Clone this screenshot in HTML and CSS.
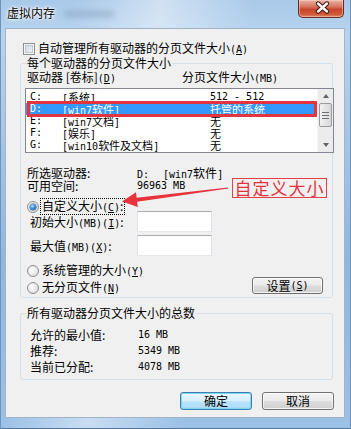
FILE: index.html
```html
<!DOCTYPE html>
<html lang="zh-CN">
<head>
<meta charset="utf-8">
<title>虚拟内存</title>
<link rel="stylesheet" href="styles.css">
</head>
<body>
<div class="window">
  <div class="titlebar">
    <span class="title">虚拟内存</span>
    <span class="title-blur"></span>
    <span class="close">
      <svg width="46" height="18" viewBox="0 0 46 18">
        <path d="M20 4.5 L29 12.5 M29 4.5 L20 12.5" stroke="#3b140e" stroke-width="4.4" stroke-linecap="round" fill="none"/>
        <path d="M20 4.5 L29 12.5 M29 4.5 L20 12.5" stroke="#ffffff" stroke-width="2.4" stroke-linecap="round" fill="none"/>
      </svg>
    </span>
  </div>

  <div class="client">
    <div class="chk-row"><span class="chk"></span><span>自动管理所有驱动器的分页文件大小<span class="m">(<u>A</u>)</span></span></div>

    <fieldset class="group g1">
      <legend>每个驱动器的分页文件大小</legend>
      <div class="hdr"><span class="c1">驱动器 [卷标]<span class="m">(<u>D</u>)</span></span><span>分页文件大小<span class="m">(MB)</span></span></div>
      <div class="list">
        <div class="rows">
          <div class="row"><span class="drv m">C:</span><span class="lbl"><span class="m">[</span>系统<span class="m">]</span></span><span class="m">512 - 512</span></div>
          <div class="row sel"><span class="drv m">D:</span><span class="lbl"><span class="m">[win7</span>软件<span class="m">]</span></span><span>托管的系统</span></div>
          <div class="row"><span class="drv m">E:</span><span class="lbl"><span class="m">[win7</span>文档<span class="m">]</span></span><span>无</span></div>
          <div class="row"><span class="drv m">F:</span><span class="lbl"><span class="m">[</span>娱乐<span class="m">]</span></span><span>无</span></div>
          <div class="row"><span class="drv m">G:</span><span class="lbl"><span class="m">[win10</span>软件及文档<span class="m">]</span></span><span>无</span></div>
        </div>
        <div class="sbar">
          <div class="sb-btn"><span class="arr up"></span></div>
          <div class="sb-thumb"><span class="grip"></span></div>
          <div class="sb-track"></div>
          <div class="sb-btn"><span class="arr down"></span></div>
        </div>
      </div>

      <div class="kv first"><span class="k">所选驱动器:</span><span class="v"><span class="m drvv">D:</span><span class="m">[win7</span>软件<span class="m">]</span></span></div>
      <div class="kv"><span class="k">可用空间:</span><span class="v m">96963 MB</span></div>

      <div class="radio-row custom"><span class="radio on"></span><span class="focus">自定义大小<span class="m">(<u>C</u>)</span>:</span></div>
      <div class="field f1"><span class="k">初始大小<span class="m">(MB)(<u>I</u>)</span>:</span><span class="input"></span></div>
      <div class="field f2"><span class="k">最大值<span class="m">(MB)(<u>X</u>)</span>:</span><span class="input"></span></div>

      <div class="opts">
        <div class="col">
          <div class="radio-row"><span class="radio"></span><span>系统管理的大小<span class="m">(<u>Y</u>)</span></span></div>
          <div class="radio-row second"><span class="radio"></span><span>无分页文件<span class="m">(<u>N</u>)</span></span></div>
        </div>
        <span class="btn set">设置<span class="m">(<u>S</u>)</span></span>
      </div>
    </fieldset>

    <fieldset class="group g2">
      <legend>所有驱动器分页文件大小的总数</legend>
      <div class="kv"><span class="k">允许的最小值:</span><span class="v m">16 MB</span></div>
      <div class="kv"><span class="k">推荐:</span><span class="v m">5349 MB</span></div>
      <div class="kv"><span class="k">当前已分配:</span><span class="v m">4078 MB</span></div>
    </fieldset>

    <div class="actions">
      <span class="btn default">确定</span>
      <span class="btn">取消</span>
    </div>
  </div>

  <svg class="annot" width="351" height="429" viewBox="0 0 351 429">
    <rect x="28.5" y="102.5" width="287" height="13" fill="none" stroke="#e2353f" stroke-width="3"/>
    <polygon points="122,201.5 136,192.3 136.6,197.7 227.9,187.4 228.1,188.6 137.1,201.8 137.8,207.1" fill="#e8323c"/>
  </svg>
  <div class="callout">自定义大小</div>
</div>
</body>
</html>
```

FILE: styles.css
```css
* { box-sizing: border-box; }
html, body { margin: 0; padding: 0; }
body {
  width: 351px;
  height: 429px;
  overflow: hidden;
  font-family: "Noto Sans CJK SC", "Noto Sans", sans-serif;
  font-size: 12px;
  color: #000;
  background: #fff;
}
u { text-decoration: underline; text-underline-offset: 1px; }

.m {
  font-family: "DejaVu Sans Mono", "Liberation Mono", monospace;
  font-size: 10px;
}

.window {
  position: relative;
  width: 351px;
  height: 429px;
  display: flex;
  flex-direction: column;
  background:
    linear-gradient(100deg, rgba(255,255,255,0) 18%, rgba(255,255,255,0.45) 38%, rgba(255,255,255,0) 60%),
    linear-gradient(180deg, #a9c9e9 0%, #b7d3ee 8%, #8fb7e0 60%, #9cc1e6 100%);
  box-shadow: inset 1px 0 #6f94bb, inset -1px 0 #6f94bb, inset 0 -1px #55779c;
}

/* title bar */
.titlebar {
  height: 28px;
  display: flex;
  align-items: flex-start;
  padding-left: 7px;
}
.title {
  margin-top: 6px;
  line-height: 14px;
  text-shadow: 0 0 5px #fff, 0 0 3px #fff, 0 0 2px #fff;
}
.title-blur {
  width: 50px;
  height: 8px;
  margin: 10px 0 0 9px;
  border-radius: 4px;
  background: rgba(140, 160, 190, 0.45);
  filter: blur(2.5px);
}
.close {
  margin-left: auto;
  margin-right: 7px;
  width: 46px;
  height: 18px;
  display: block;
  border: 1px solid #6a2a22;
  border-top: none;
  border-radius: 0 0 5px 5px;
  background: linear-gradient(180deg, #eab3a6 0%, #d8735f 40%, #c6442b 55%, #cf5a3c 85%, #e08a6a 100%);
  box-shadow: inset 0 0 0 1px rgba(255, 220, 210, 0.45);
}
.close svg { display: block; margin: -1px 0 0 -1px; }

/* client area */
.client {
  flex: 1;
  margin: 0 6px 11px 5px;
  border: 1px solid #a2b4c8;
  background: #f0f0f0;
}

.chk-row {
  display: flex;
  align-items: center;
  gap: 3px;
  height: 14px;
  line-height: 14px;
  margin: 13px 0 0 17px;
}
.chk {
  width: 12px;
  height: 12px;
  border: 1px solid #8e8f8f;
  background: linear-gradient(135deg, #cdd1d6, #f7f7f7);
  box-shadow: inset 0 0 0 1px #f4f4f4, inset 0 0 0 2px #c4c8cd;
}

/* group boxes */
.group {
  margin: 0 0 0 14px;
  width: 313px;
  min-width: 0;
  border: 1px solid #d5dfe5;
  border-radius: 3px;
  padding: 0 0 3px 6px;
}
.group legend {
  padding: 0 1px;
  margin-left: -1px;
  height: 14px;
  line-height: 14px;
  font-size: 12px;
}
.g2 {
  margin-top: 8px;
  padding-top: 7px;
  padding-bottom: 4px;
}

.hdr {
  display: flex;
  height: 14px;
  line-height: 14px;
}
.hdr .c1 { width: 155px; }

/* list box */
.list {
  margin: 4px -2px 0 -2px;
  height: 65px;
  border: 1px solid #828790;
  background: #fff;
  display: flex;
  font-size: 11px;
}
.rows { flex: 1; padding-top: 2px; }
.row {
  display: flex;
  height: 12px;
  line-height: 12px;
  padding-left: 4px;
  white-space: pre;
}
.row .drv { width: 32px; }
.row .lbl { width: 148px; }
.row.sel { background: #3399ff; color: #fff; }

.sbar {
  width: 16px;
  display: flex;
  flex-direction: column;
  background: #ececec;
  border-left: 1px solid #f6f6f6;
}
.sb-btn {
  height: 14px;
  display: flex;
  align-items: center;
  justify-content: center;
}
.arr {
  width: 0;
  height: 0;
  border-left: 3.5px solid transparent;
  border-right: 3.5px solid transparent;
}
.arr.up { border-bottom: 4px solid #606468; }
.arr.down { border-top: 4px solid #606468; }
.sb-thumb {
  height: 24px;
  margin: 0 1px;
  border: 1px solid #9a9a9a;
  border-radius: 2px;
  background: linear-gradient(90deg, #f3f3f3, #e4e4e4 50%, #d8d8d8);
  display: flex;
  align-items: center;
  justify-content: center;
}
.grip {
  width: 7px;
  height: 7px;
  background: repeating-linear-gradient(180deg, #707070 0 1px, transparent 1px 3px);
}
.sb-track { flex: 1; }

/* key-value rows */
.kv {
  display: flex;
  height: 13px;
  line-height: 13px;
  white-space: pre;
}
.kv.first { margin-top: 13px; }
.kv .k { width: 110px; }
.drvv { display: inline-block; width: 26px; }

.g2 .kv { height: 16px; line-height: 16px; }
.g2 .kv .k { width: 111px; padding-left: 3px; }

/* radios */
.radio-row {
  display: flex;
  align-items: center;
  gap: 3px;
  height: 13px;
  line-height: 13px;
}
.radio-row.custom { margin-top: 8px; }
.radio-row.second { margin-top: 4px; }
.radio {
  position: relative;
  width: 12px;
  height: 12px;
  border-radius: 50%;
  border: 1px solid #8e8f8f;
  background: radial-gradient(circle at 40% 40%, #ffffff 0%, #e6e6e6 60%, #c9c9c9 100%);
}
.radio.on::after {
  content: "";
  position: absolute;
  left: 2px;
  top: 2px;
  width: 6px;
  height: 6px;
  border-radius: 50%;
  background: radial-gradient(circle at 40% 35%, #b6e3fb 0%, #3d8fd8 45%, #0e4d98 100%);
  box-shadow: 0 0 0 0.5px #1b4f86;
}
.focus {
  outline: 1px dotted #000;
  outline-offset: 0;
  padding: 0 1px;
  margin-left: -1px;
}

/* edit fields */
.field {
  display: flex;
  align-items: center;
  height: 21px;
  white-space: pre;
}
.field.f1 { margin-top: -2px; }
.field.f2 { margin-top: 3px; }
.field .k { width: 110px; padding-left: 3px; }
.input {
  width: 75px;
  height: 21px;
  background: #fff;
  border: 1px solid;
  border-color: #abadb3 #dbdfe6 #e3e9ef #e2e3ea;
}

.opts {
  display: flex;
  align-items: flex-end;
  margin-top: 8px;
}

/* buttons */
.btn {
  display: flex;
  align-items: center;
  justify-content: center;
  width: 72px;
  height: 18px;
  line-height: 16px;
  border: 1px solid #707070;
  border-radius: 3px;
  background: linear-gradient(180deg, #f2f2f2 0%, #ebebeb 48%, #dddddd 52%, #cfcfcf 100%);
  box-shadow: inset 0 0 0 1px rgba(255, 255, 255, 0.75);
  white-space: pre;
}
.btn.set {
  width: 71px;
  height: 17px;
  margin-left: auto;
  margin-right: 9px;
}
.btn.default {
  border-color: #3c7fb1;
  background: linear-gradient(180deg, #eaf6fd 0%, #d9f0fc 48%, #bee6fd 52%, #a7d9f5 100%);
  box-shadow: inset 0 0 0 1px #7fd3f5;
}
.actions {
  display: flex;
  justify-content: flex-end;
  gap: 10px;
  margin-top: 12px;
  padding-right: 10px;
}

/* annotations */
.annot {
  position: absolute;
  left: 0;
  top: 0;
  pointer-events: none;
}
.callout {
  position: absolute;
  left: 232px;
  top: 178px;
  width: 95px;
  height: 20px;
  border: 1px solid #e5404a;
  color: #e5323e;
  font-size: 17px;
  line-height: 18px;
  text-align: center;
  letter-spacing: 1px;
}
```
